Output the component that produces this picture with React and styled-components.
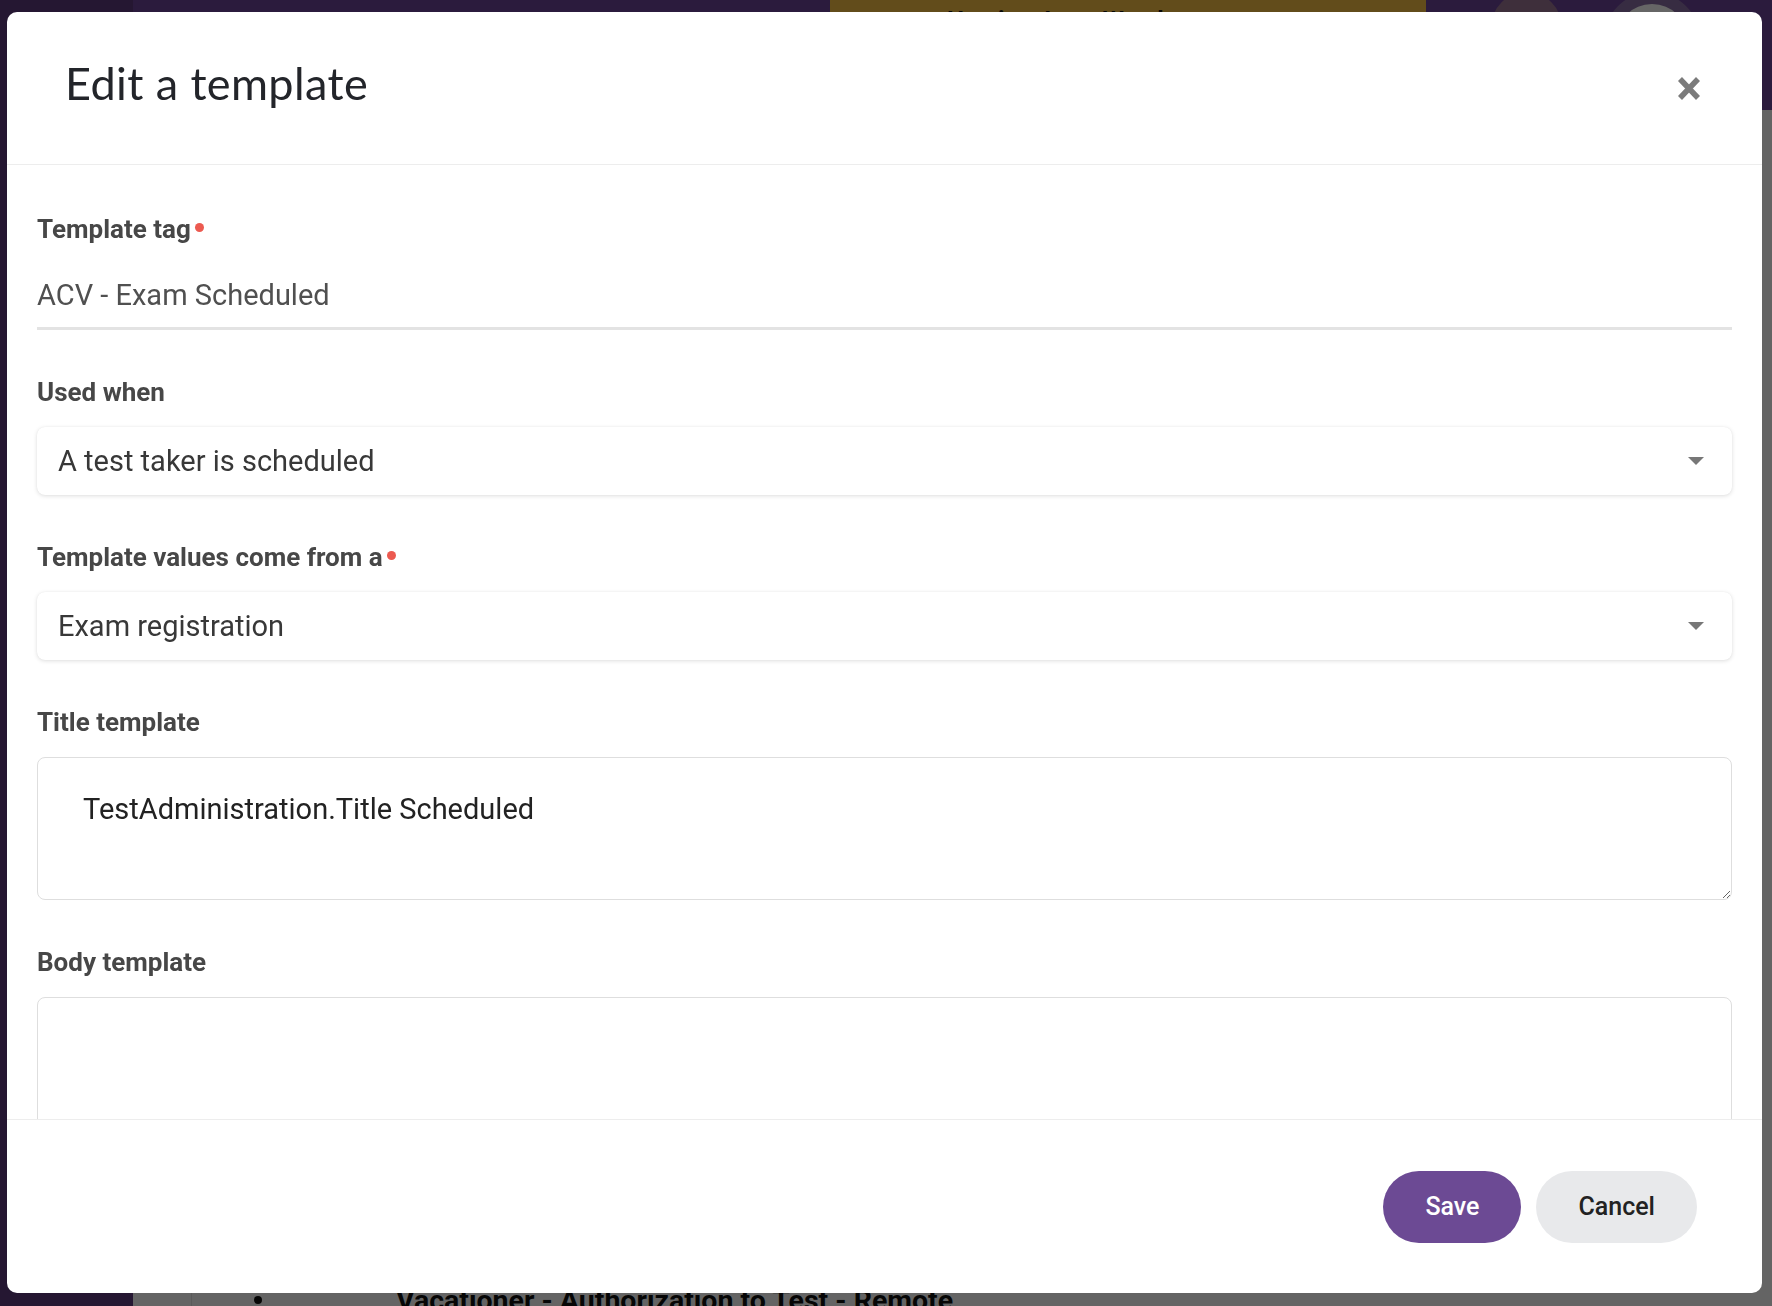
import styled, { createGlobalStyle } from "styled-components";

const GlobalStyle = createGlobalStyle`
  html,
  body {
    margin: 0;
    height: 100%;
    overflow: hidden;
  }

  body {
    font-family: Roboto, "Liberation Sans", sans-serif;
    background: #fafafa;
  }

  * {
    box-sizing: border-box;
  }
`;

// ----- page behind the dialog -----

const Page = styled.div`
  display: flex;
  height: 100vh;
`;

const Sidebar = styled.aside`
  background: #5c3b7d;
  flex: 0 0 133px;
`;

const Main = styled.div`
  display: flex;
  flex: 1;
  flex-direction: column;
  min-width: 0;
`;

const TopBar = styled.header`
  align-items: flex-start;
  background: #6c4499;
  display: flex;
  flex: 0 0 110px;
  overflow: hidden;
  padding-left: 697px;
`;

const Banner = styled.div`
  background: #f5bf45;
  color: #111;
  font-size: 24px;
  font-weight: 700;
  height: 70px;
  padding: 6px 0 0 117px;
  width: 596px;
`;

const Avatar = styled.div`
  background: ${(props) => props.color};
  border: ${(props) => (props.ring ? `12px solid #8a6fa5` : `none`)};
  border-radius: 50%;
  flex: 0 0 auto;
  height: ${(props) => props.size}px;
  margin-left: ${(props) => props.gap}px;
  margin-top: -8px;
  width: ${(props) => props.size}px;
`;

const Content = styled.main`
  background: #fafafa;
  display: flex;
  flex: 1;
  flex-direction: column;
  justify-content: flex-end;
  padding-left: 58px;
`;

const ListRow = styled.div`
  align-items: flex-start;
  border-left: 1px solid #e2e2e2;
  display: flex;
  height: 20px;
  overflow: visible;
`;

const Bullet = styled.span`
  background: #111;
  border-radius: 50%;
  flex: 0 0 auto;
  height: 8px;
  margin: 10px 0 0 62px;
  width: 8px;
`;

const RowTitle = styled.span`
  color: #111;
  font-size: 28.5px;
  font-weight: 700;
  line-height: 30px;
  margin-left: 134px;
  white-space: nowrap;
`;

// ----- dialog -----

const Backdrop = styled.div`
  background: rgba(0, 0, 0, 0.6);
  display: flex;
  inset: 0;
  padding: 12px 10px 13px 7px;
  position: fixed;
`;

const Dialog = styled.div`
  background: #ffffff;
  border-radius: 10px;
  display: flex;
  flex: 1;
  flex-direction: column;
  overflow: hidden;
`;

const Header = styled.div`
  align-items: center;
  border-bottom: 1px solid #ededed;
  display: flex;
  flex: 0 0 153px;
  justify-content: space-between;
  padding: 0 60px 0 58px;
`;

const Title = styled.h1`
  color: #23252a;
  font-family: Lato, "Open Sans", sans-serif;
  font-size: 45px;
  font-weight: 400;
  letter-spacing: 0.4px;
  line-height: 52px;
  margin: 0 0 10px;
`;

const CloseButton = styled.button`
  background: none;
  border: 0;
  cursor: pointer;
  display: flex;
  padding: 0;
`;

const Body = styled.div`
  flex: 1;
  overflow: hidden;
  padding: 49px 30px 0;
`;

const Field = styled.div`
  margin-bottom: 47px;
`;

const Label = styled.label`
  align-items: flex-start;
  color: #474747;
  display: flex;
  font-size: 26px;
  font-weight: 700;
  line-height: 30px;
  margin-bottom: 20px;
`;

const Required = styled.span`
  background: #ec5a50;
  border-radius: 50%;
  height: 9px;
  margin: 9px 0 0 4px;
  width: 9px;
`;

const TextValue = styled.div`
  border-bottom: 3px solid #e3e3e3;
  color: #505050;
  font-size: 29px;
  line-height: 40px;
  padding: 11px 0 12px;
`;

const Select = styled.div`
  align-items: center;
  background: #ffffff;
  border-radius: 8px;
  box-shadow: 0 1px 4px rgba(0, 0, 0, 0.13), 0 0 1px rgba(0, 0, 0, 0.08);
  color: #383838;
  cursor: pointer;
  display: flex;
  font-size: 29px;
  height: 68px;
  justify-content: space-between;
  padding: 0 28px 0 21px;
`;

const TextArea = styled.textarea`
  border: 1px solid #dedede;
  border-radius: 8px;
  color: #222222;
  display: block;
  font-family: Roboto, "Liberation Sans", sans-serif;
  font-size: 29px;
  height: ${(props) => props.height}px;
  line-height: 40px;
  outline: none;
  padding: 31px 45px 25px;
  resize: vertical;
  width: 100%;
`;

const Footer = styled.div`
  align-items: center;
  border-top: 1px solid #ededed;
  display: flex;
  flex: 0 0 174px;
  gap: 15px;
  justify-content: flex-end;
  padding-right: 65px;
`;

const Button = styled.button`
  background: ${(props) => (props.primary ? `#6c4a94` : `#e8e9eb`)};
  border: 0;
  border-radius: 36px;
  color: ${(props) => (props.primary ? `#ffffff` : `#222222`)};
  cursor: pointer;
  font-family: Roboto, "Liberation Sans", sans-serif;
  font-size: 25px;
  font-weight: 500;
  height: 72px;
  padding: 0 42px;
`;

function CloseIcon() {
  return (
    <svg width="26" height="27" viewBox="0 0 26 27">
      <path
        d="M4 4 L22 23 M22 4 L4 23"
        stroke="#7b7b7b"
        strokeWidth="5.5"
        fill="none"
      />
    </svg>
  );
}

function Caret() {
  return (
    <svg width="16" height="8" viewBox="0 0 16 8">
      <path d="M0 0 H16 L8 8 Z" fill="#777777" />
    </svg>
  );
}

export default function App() {
  return (
    <>
      <GlobalStyle />
      <Page>
        <Sidebar />
        <Main>
          <TopBar>
            <Banner>Hosting Jane: Weather status report</Banner>
            <Avatar color="#9c7593" size={71} gap={65} />
            <Avatar color="#ffffff" size={96} gap={42} ring />
          </TopBar>
          <Content>
            <ListRow>
              <Bullet />
              <RowTitle>Vacationer - Authorization to Test - Remote</RowTitle>
            </ListRow>
          </Content>
        </Main>
      </Page>

      <Backdrop>
        <Dialog role="dialog">
          <Header>
            <Title>Edit a template</Title>
            <CloseButton aria-label="Close">
              <CloseIcon />
            </CloseButton>
          </Header>

          <Body>
            <Field>
              <Label>
                Template tag
                <Required />
              </Label>
              <TextValue>ACV - Exam Scheduled</TextValue>
            </Field>

            <Field>
              <Label>Used when</Label>
              <Select>
                A test taker is scheduled
                <Caret />
              </Select>
            </Field>

            <Field>
              <Label>
                Template values come from a
                <Required />
              </Label>
              <Select>
                Exam registration
                <Caret />
              </Select>
            </Field>

            <Field>
              <Label>Title template</Label>
              <TextArea
                height={143}
                readOnly
                value="TestAdministration.Title Scheduled"
              />
            </Field>

            <Field>
              <Label>Body template</Label>
              <TextArea height={240} readOnly value="" />
            </Field>
          </Body>

          <Footer>
            <Button primary>Save</Button>
            <Button>Cancel</Button>
          </Footer>
        </Dialog>
      </Backdrop>
    </>
  );
}
